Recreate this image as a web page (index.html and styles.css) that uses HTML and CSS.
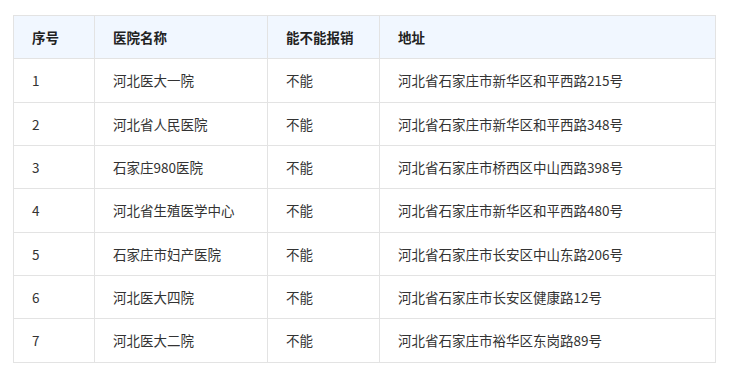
FILE: index.html
```html
<!DOCTYPE html>
<html lang="zh">
<head>
<meta charset="utf-8">
<link rel="stylesheet" href="styles.css">
</head>
<body>
<div class="wrap">
<table class="tbl">
<colgroup>
<col class="c1"><col class="c2"><col class="c3"><col class="c4">
</colgroup>
<thead>
<tr><th>序号</th><th>医院名称</th><th>能不能报销</th><th>地址</th></tr>
</thead>
<tbody>
<tr><td>1</td><td>河北医大一院</td><td>不能</td><td>河北省石家庄市新华区和平西路215号</td></tr>
<tr><td>2</td><td>河北省人民医院</td><td>不能</td><td>河北省石家庄市新华区和平西路348号</td></tr>
<tr><td>3</td><td>石家庄980医院</td><td>不能</td><td>河北省石家庄市桥西区中山西路398号</td></tr>
<tr><td>4</td><td>河北省生殖医学中心</td><td>不能</td><td>河北省石家庄市新华区和平西路480号</td></tr>
<tr><td>5</td><td>石家庄市妇产医院</td><td>不能</td><td>河北省石家庄市长安区中山东路206号</td></tr>
<tr><td>6</td><td>河北医大四院</td><td>不能</td><td>河北省石家庄市长安区健康路12号</td></tr>
<tr><td>7</td><td>河北医大二院</td><td>不能</td><td>河北省石家庄市裕华区东岗路89号</td></tr>
</tbody>
</table>
</div>
</body>
</html>
```

FILE: styles.css
```css
html, body {
  margin: 0;
  padding: 0;
  background: #fff;
}
.wrap {
  padding: 15px 0 0 13px;
}
.tbl {
  width: 702px;
  table-layout: fixed;
  border-collapse: collapse;
  font-family: "Noto Sans CJK SC", "Noto Sans", sans-serif;
  font-size: 13.5px;
  color: #333;
}
.c1 { width: 81px; }
.c2 { width: 173px; }
.c3 { width: 112px; }
.c4 { width: 336px; }
.tbl th, .tbl td {
  border: 1px solid #e3e3e3;
  padding: 11px 18px;
  line-height: 20.33px;
  text-align: left;
  white-space: nowrap;
}
.tbl th {
  background: #f1f7ff;
  color: #222;
  font-weight: bold;
}
.tbl td {
  color: #333;
}
```
